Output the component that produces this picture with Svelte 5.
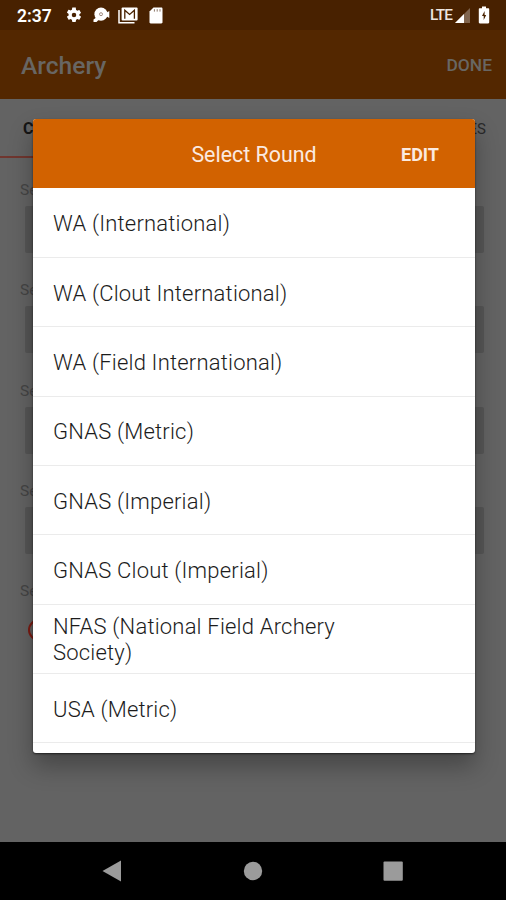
<script lang="ts">
	const rounds = [
		'WA (International)',
		'WA (Clout International)',
		'WA (Field International)',
		'GNAS (Metric)',
		'GNAS (Imperial)',
		'GNAS Clout (Imperial)',
		'NFAS (National Field Archery Society)',
		'USA (Metric)'
	];

	const fields = ['Set', 'Set', 'Set', 'Set'];
</script>

<div class="screen">
	<header class="status">
		<span class="status__time">2:37</span>
		<svg class="status__gear" width="18" height="18" viewBox="0 0 24 24" fill="#fff">
			<path d="M19.14 12.94c.04-.3.06-.61.06-.94s-.02-.64-.07-.94l2.03-1.58a.49.49 0 0 0 .12-.61l-1.92-3.32a.49.49 0 0 0-.59-.22l-2.39.96a7 7 0 0 0-1.62-.94l-.36-2.54A.48.48 0 0 0 13.92 2h-3.84a.48.48 0 0 0-.47.41l-.36 2.54c-.59.24-1.13.57-1.62.94l-2.39-.96a.48.48 0 0 0-.59.22L2.74 8.47a.48.48 0 0 0 .12.61l2.03 1.58c-.05.3-.09.63-.09.94s.02.64.07.94l-2.03 1.58a.49.49 0 0 0-.12.61l1.92 3.32c.12.22.37.29.59.22l2.39-.96c.5.38 1.03.7 1.62.94l.36 2.54c.05.24.24.41.48.41h3.84c.24 0 .44-.17.47-.41l.36-2.54c.59-.24 1.13-.56 1.62-.94l2.39.96c.22.08.47 0 .59-.22l1.92-3.32a.48.48 0 0 0-.12-.61l-2.01-1.58zM12 15a3 3 0 1 1 0-6 3 3 0 0 1 0 6z" />
		</svg>
		<svg class="status__record" width="17" height="16" viewBox="0 0 17 16">
			<circle cx="8" cy="7.2" r="6.6" fill="#fff" />
			<path d="M0.5 12.5L4 10l1.5 3-2 2H.5z M13 6l3.3-2v7L13 9z" fill="#fff" />
			<circle cx="8" cy="7.2" r="1.5" fill="none" stroke="#a18b80" stroke-width="1" />
		</svg>
		<svg class="status__mail" width="20" height="17" viewBox="0 0 20 17">
			<path d="M1 3v12.8h15.5" fill="none" stroke="#fff" stroke-width="1.5" />
			<rect x="3.6" y="0.5" width="16" height="13" rx="1" fill="#fff" />
			<path d="M6.8 11.8V3.2l4.8 4.2 4.8-4.2v8.6" fill="none" stroke="#482100" stroke-width="1.3" />
		</svg>
		<svg class="status__sd" width="14" height="17" viewBox="0 0 14 17">
			<path d="M4.5.5h7.8c.7 0 1.2.5 1.2 1.2v13.6c0 .7-.5 1.2-1.2 1.2H1.7c-.7 0-1.2-.5-1.2-1.2V4.5z" fill="#fff" />
			<path d="M5.4 2.2v2.4M8.2 2.2v2.4M11 2.2v2.4" stroke="#8d786a" stroke-width="1" />
		</svg>
		<span class="status__network">LTE</span>
		<svg class="status__signal" width="15" height="15" viewBox="0 0 15 15">
			<path d="M0 15L15 0v15z" fill="#80654f" />
			<path d="M0 15l9-9v9z" fill="#fff" />
		</svg>
		<svg class="status__battery" width="12" height="18" viewBox="0 0 12 18">
			<path d="M4 .5h4v1.8h2.2c.6 0 1 .4 1 1v13c0 .6-.4 1.1-1 1.1H1.8c-.6 0-1-.5-1-1.1v-13c0-.6.4-1 1-1H4z" fill="#fff" />
			<path d="M6.6 5L4 10h1.7v4L8.2 9H6.6z" fill="#482100" />
		</svg>
	</header>

	<div class="appbar">
		<span class="appbar__title">Archery</span>
		<span class="appbar__done">DONE</span>
	</div>

	<nav class="tabs">
		<span class="tab tab--active">CREATE</span>
		<span class="tab">SCORES</span>
	</nav>

	<main class="form">
		{#each fields as label}
			<div class="field">
				<span class="field__label">{label}</span>
				<div class="field__box"></div>
			</div>
		{/each}
		<span class="field__label">Set</span>
		<span class="radio"></span>
	</main>

	<footer class="navbar">
		<svg width="20" height="22" viewBox="0 0 20 22"><path d="M.5 11L19 .5v21z" fill="#9b9b9b" /></svg>
		<svg width="20" height="20" viewBox="0 0 20 20"><circle cx="10" cy="10" r="9.2" fill="#9b9b9b" /></svg>
		<svg width="20" height="20" viewBox="0 0 20 20"><rect x=".5" y=".5" width="19.3" height="19.3" rx="1" fill="#9b9b9b" /></svg>
	</footer>

	<div class="overlay">
		<section class="dialog">
			<div class="dialog__header">
				<span></span>
				<span class="dialog__title">Select Round</span>
				<span class="dialog__edit">EDIT</span>
			</div>
			<div class="dialog__list">
				{#each rounds as round}
					<div class="row"><span class="row__text">{round}</span></div>
				{/each}
			</div>
		</section>
	</div>
</div>

<style>
	:global(body) {
		margin: 0;
	}

	.screen {
		position: relative;
		display: flex;
		flex-direction: column;
		width: 506px;
		height: 900px;
		overflow: hidden;
		background: #636363;
		font-family: Roboto, sans-serif;
	}

	/* Status bar */
	.status {
		display: flex;
		align-items: center;
		box-sizing: border-box;
		height: 30px;
		padding: 0 16px 0 17px;
		background: #482100;
		color: #fff;
		flex-shrink: 0;
	}

	.status__time {
		width: 48px;
		padding-top: 2px;
		font-size: 17.5px;
		font-weight: 600;
	}

	.status__gear { margin-right: 10px; }
	.status__record { margin-right: 8px; }
	.status__mail { margin-right: 11px; }

	.status__network {
		margin-left: auto;
		font-size: 15.3px;
		letter-spacing: -0.8px;
		font-weight: 500;
		color: #eee6e0;
	}

	.status__signal { margin: 1px 8px 0 3px; }

	/* App bar */
	.appbar {
		display: flex;
		align-items: center;
		justify-content: space-between;
		box-sizing: border-box;
		height: 69px;
		padding: 1px 14px 0 21px;
		background: #532700;
		color: #686663;
		flex-shrink: 0;
	}

	.appbar__title {
		font-size: 24.6px;
		font-weight: 500;
	}

	.appbar__done {
		font-size: 17.4px;
		font-weight: 500;
	}

	/* Tabs */
	.tabs {
		display: flex;
		justify-content: space-between;
		height: 59px;
		padding-right: 20px;
		flex-shrink: 0;
	}

	.tab {
		box-sizing: border-box;
		font-size: 15px;
		line-height: 60px;
		color: #292929;
	}

	.tab--active {
		width: 168px;
		padding-left: 23px;
		font-weight: 700;
		font-size: 16px;
		color: #151515;
		border-bottom: 2px solid #70362f;
	}

	/* Form */
	.form {
		flex: 1;
		padding: 22px 22px 0 20px;
	}

	.field {
		height: 100.3px;
	}

	.field__label {
		display: block;
		height: 20px;
		font-size: 15.5px;
		line-height: 20px;
		color: #454545;
	}

	.field__box {
		height: 47px;
		margin: 6px 0 0 5px;
		border-radius: 2px;
		background: #565656;
	}

	.radio {
		display: block;
		box-sizing: border-box;
		width: 22px;
		height: 22px;
		margin: 18px 0 0 8px;
		border: 2px solid #7c1b12;
		border-radius: 50%;
	}

	/* System navigation */
	.navbar {
		display: flex;
		align-items: center;
		justify-content: space-between;
		box-sizing: border-box;
		height: 58px;
		padding: 0 103px 0 102px;
		background: #000;
		flex-shrink: 0;
	}

	/* Dialog */
	.overlay {
		position: absolute;
		inset: 0;
		padding: 119px 31px 0 33px;
	}

	.dialog {
		height: 634px;
		overflow: hidden;
		border-radius: 3px;
		background: #fff;
		box-shadow: 0 1px 2px rgba(0, 0, 0, 0.6), 0 13px 24px rgba(0, 0, 0, 0.3);
	}

	.dialog__header {
		display: grid;
		grid-template-columns: 1fr auto 1fr;
		align-items: center;
		box-sizing: border-box;
		height: 68.6px;
		padding-top: 2px;
		background: #d26200;
		color: #fbeae0;
	}

	.dialog__title {
		font-size: 21.4px;
	}

	.dialog__edit {
		padding-right: 36px;
		text-align: right;
		font-size: 18px;
		font-weight: 700;
	}

	.dialog__list {
		padding-top: 1px;
	}

	.row {
		display: flex;
		align-items: center;
		box-sizing: border-box;
		height: 69.35px;
		padding: 3px 110px 0 20px;
		border-bottom: 1px solid #ebebeb;
	}

	.row__text {
		font-size: 22px;
		font-weight: 350;
		line-height: 26px;
		letter-spacing: 0.2px;
		color: #1c1c1c;
	}
</style>
